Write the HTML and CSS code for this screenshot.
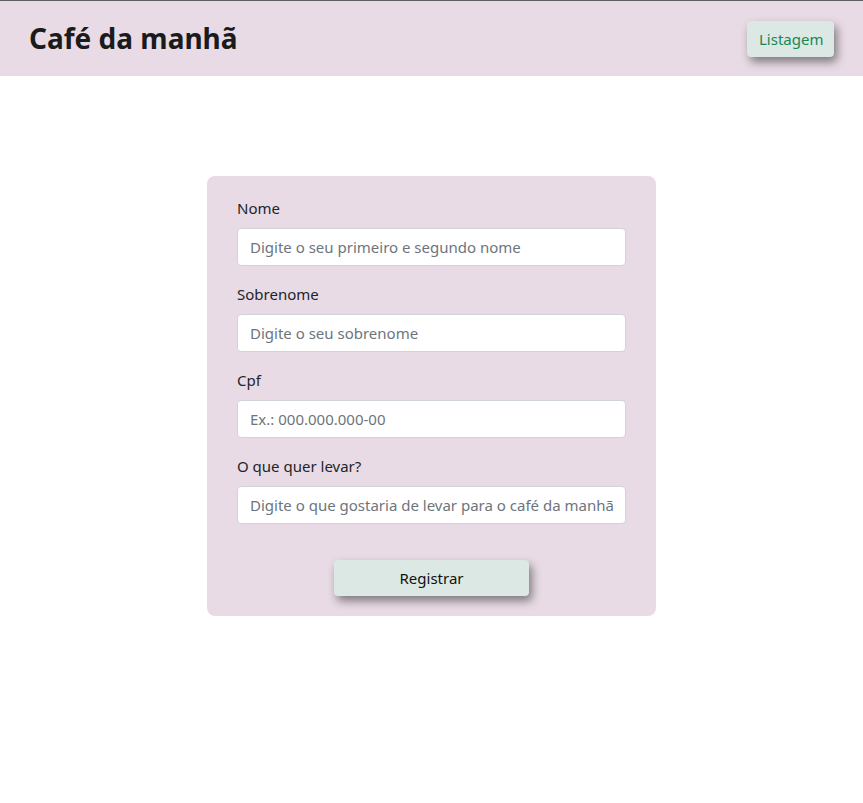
FILE: index.html
```html
<!DOCTYPE html>
<html lang="pt-BR">
<head>
<meta charset="utf-8">
<title>Café da manhã</title>
<link rel="stylesheet" href="styles.css">
</head>
<body>
<header class="topbar">
  <h2 class="title">Café da manhã</h2>
  <button class="btn btn-list" type="button">Listagem</button>
</header>
<main class="main">
  <form class="card">
    <div class="group">
      <label class="label" for="nome">Nome</label>
      <input class="input" id="nome" type="text" placeholder="Digite o seu primeiro e segundo nome">
    </div>
    <div class="group">
      <label class="label" for="sobrenome">Sobrenome</label>
      <input class="input" id="sobrenome" type="text" placeholder="Digite o seu sobrenome">
    </div>
    <div class="group">
      <label class="label" for="cpf">Cpf</label>
      <input class="input" id="cpf" type="text" placeholder="Ex.: 000.000.000-00">
    </div>
    <div class="group">
      <label class="label" for="levar">O que quer levar?</label>
      <input class="input" id="levar" type="text" placeholder="Digite o que gostaria de levar para o café da manhã">
    </div>
    <div class="actions">
      <button class="btn btn-submit" type="button">Registrar</button>
    </div>
  </form>
</main>
</body>
</html>
```
FILE: styles.css
```css
* { box-sizing: border-box; }
html, body { margin: 0; padding: 0; }
body {
  font-family: "Noto Sans", "Open Sans", sans-serif;
  font-size: 16px;
  line-height: 1.5;
  color: #212529;
  background: #fff;
  border-top: 1px solid #5f5f5f;
}
.topbar {
  height: 75px;
  background: #e8dbe5;
  display: flex;
  align-items: center;
  justify-content: space-between;
  padding: 0 29px 0 29px;
}
.title {
  margin: 0;
  font-size: 28px;
  font-weight: 700;
  line-height: 1.2;
  color: #1b1b1b;
}
.btn {
  font-family: inherit;
  font-size: 15px;
  line-height: 24px;
  border: 0;
  border-radius: 4px;
  background: #dbe8e3;
  padding: 6px 12px;
  box-shadow: 3px 5px 10px rgba(0, 0, 0, 0.45);
  cursor: pointer;
}
.btn-list {
  color: #198754;
  width: 87px;
  height: 36px;
  margin-top: 1px;
}
.main {
  display: flex;
  justify-content: center;
  padding-top: 100px;
}
.card {
  width: 449px;
  background: #e8dbe5;
  border-radius: 8px;
  padding: 20px 30px 20px;
}
.group { margin-bottom: 16px; }
.label {
  display: block;
  margin-bottom: 8px;
  font-size: 15px;
  line-height: 24px;
}
.input {
  display: block;
  width: 100%;
  height: 38px;
  padding: 6px 12px;
  font-family: inherit;
  font-size: 15px;
  line-height: 24px;
  color: #212529;
  background: #fff;
  border: 1px solid #ced4da;
  border-radius: 4px;
}
.input::placeholder { color: #6c757d; opacity: 1; }
.actions {
  display: flex;
  justify-content: center;
  padding-top: 20px;
}
.btn-submit {
  width: 195px;
  height: 36px;
  color: #111;
}
```
